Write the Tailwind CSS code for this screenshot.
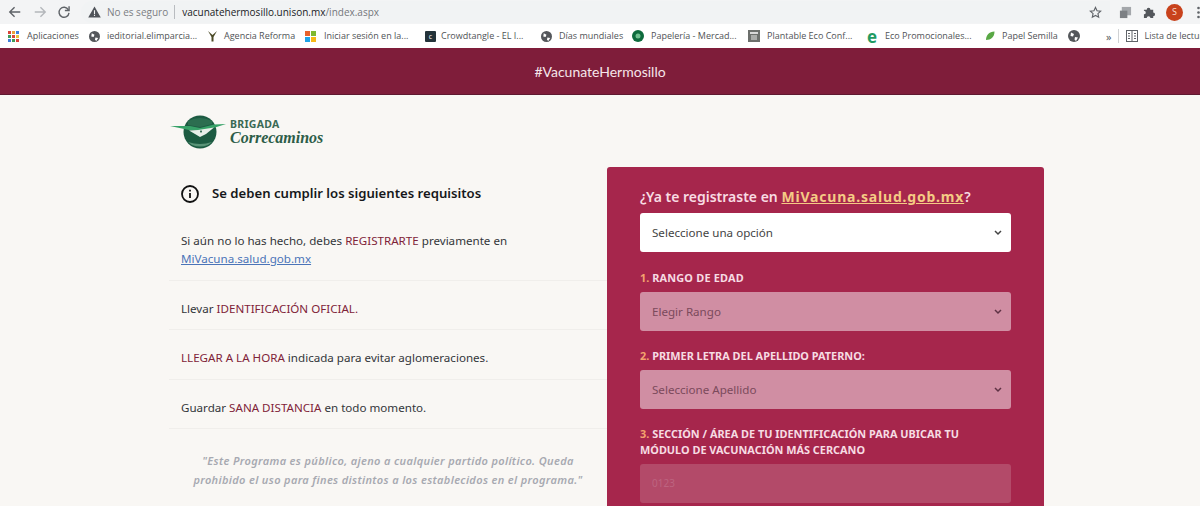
<!DOCTYPE html>
<html lang="es">
  <head>
    <meta charset="UTF-8" />
    <title>#VacunateHermosillo</title>
    <script src="https://cdn.jsdelivr.net/npm/@tailwindcss/browser@4"></script>
  </head>
  <body class="h-[506px] overflow-hidden bg-[#f9f7f4] font-['Noto_Sans','Open_Sans',sans-serif]">
    <!-- Browser toolbar -->
    <div class="flex h-[24px] items-center bg-[#f3f4f5] pl-[8px] text-[#5f6368]">
      <svg class="w-[14px] h-[14px]" viewBox="0 0 16 16" fill="none" stroke="#5f6368" stroke-width="1.6"><path d="M14 8H2M7.5 2.5 2 8l5.500 5.500" /></svg>
      <svg class="ml-[11px] w-[14px] h-[14px]" viewBox="0 0 16 16" fill="none" stroke="#b4b7bb" stroke-width="1.6"><path d="M2 8h12M8.500 2.500 14 8l-5.500 5.500" /></svg>
      <svg class="ml-[10px] w-[14px] h-[14px]" viewBox="0 0 16 16" fill="none" stroke="#5f6368" stroke-width="1.6"><path d="M13 5.500A5.700 5.700 0 1 0 13.700 9" /><path d="M13.800 1.500v4.800H9" /></svg>
      <div class="ml-[10px] flex h-[22px] flex-1 items-center rounded-l-full bg-[#f1f3f4] pl-[7px] font-['Open_Sans',sans-serif] text-[10px]">
        <svg class="w-[13px] h-[12px]" viewBox="0 0 14 13"><path d="M7 .5 13.800 12.500H.2Z" fill="#50545a" /><path d="M6.400 4.500h1.200v4.200H6.400zM6.400 9.600h1.200v1.200H6.400z" fill="#f1f3f4" /></svg>
        <span class="ml-[6px] text-[#7b7e83]">No es seguro</span>
        <span class="ml-[6px] h-[14px] w-px bg-[#b9bcc0]"></span>
        <span class="ml-[7px] text-[#202124]">vacunatehermosillo.unison.mx<span class="text-[#74777c]">/index.aspx</span></span>
        <svg class="ml-auto mr-[8px] w-[13px] h-[13px]" viewBox="0 0 16 16" fill="none" stroke="#5f6368" stroke-width="1.400"><path d="m8 1.800 1.900 4.100 4.400.5-3.300 3 .9 4.400L8 11.600l-3.900 2.200.9-4.400-3.300-3 4.400-.5Z" /></svg>
      </div>
      <div class="ml-[9px] flex items-center">
        <svg class="w-[13px] h-[13px]" viewBox="0 0 14 14"><rect x="3" y="1" width="10" height="9" fill="#a4a7ab" /><rect x="1" y="5" width="8" height="8" fill="#7d8084" /></svg>
        <svg class="ml-[11px] w-[13px] h-[13px]" viewBox="0 0 14 14" fill="#54575c"><path d="M1 4h3a2 2 0 0 1 4 0h3v3a2 2 0 0 1 0 4v2H8a2 2 0 0 0-4 0H1V9a2 2 0 0 0 0-4Z" /></svg>
        <span class="ml-[10px] flex h-[17px] w-[17px] items-center justify-center rounded-full bg-[#c8421c] text-[9px] text-[#f7d7cb]">S</span>
        <svg class="ml-[14px] w-[3px] h-[13px]" viewBox="0 0 3 13" fill="#5f6368"><circle cx="1.500" cy="2" r="1.300" /><circle cx="1.500" cy="6.500" r="1.300" /><circle cx="1.500" cy="11" r="1.300" /></svg>
      </div>
    </div>

    <!-- Bookmarks bar -->
    <div class="flex h-[24px] items-center overflow-hidden whitespace-nowrap bg-white pl-[8px] font-['Open_Sans',sans-serif] text-[9px] text-[#505356] *:shrink-0">
      <div class="flex w-[81px] items-center">
        <svg class="w-[11px] h-[11px]" viewBox="0 0 11 11"><rect x="0" y="0" width="3" height="3" fill="#d9453a" /><rect x="4" y="0" width="3" height="3" fill="#e8a33b" /><rect x="8" y="0" width="3" height="3" fill="#3f7fdb" /><rect x="0" y="4" width="3" height="3" fill="#3f9a57" /><rect x="4" y="4" width="3" height="3" fill="#d9453a" /><rect x="8" y="4" width="3" height="3" fill="#e8c33b" /><rect x="0" y="8" width="3" height="3" fill="#3f7fdb" /><rect x="4" y="8" width="3" height="3" fill="#3f9a57" /><rect x="8" y="8" width="3" height="3" fill="#d9453a" /></svg>
        <span class="ml-[8px]">Aplicaciones</span>
      </div>
      <div class="flex w-[118px] items-center">
        <svg class="w-[11px] h-[11px]" viewBox="0 0 12 12"><circle cx="6" cy="6" r="6" fill="#54575b" /><path d="M3 2.500 6 4 5 6.500 2.500 6ZM7 7l3 .5L8 11 6.500 9.500Z" fill="#fff" /></svg>
        <span class="ml-[7px]">ieditorial.elimparcia...</span>
      </div>
      <div class="flex w-[98px] items-center">
        <svg class="w-[11px] h-[12px]" viewBox="0 0 11 12" fill="#4b4a26"><path d="M1 1 5.500 5 10 1 6.500 7v4.500h-2V7Z" /></svg>
        <span class="ml-[6px]">Agencia Reforma</span>
      </div>
      <div class="flex w-[120px] items-center">
        <svg class="w-[11px] h-[11px]" viewBox="0 0 11 11"><rect width="5" height="5" fill="#e8622c" /><rect x="6" width="5" height="5" fill="#7fb82f" /><rect y="6" width="5" height="5" fill="#1fa3e8" /><rect x="6" y="6" width="5" height="5" fill="#f7b917" /></svg>
        <span class="ml-[8px]">Iniciar sesión en la...</span>
      </div>
      <div class="flex w-[116px] items-center">
        <span class="flex h-[11px] w-[11px] items-center justify-center rounded-[1px] bg-[#24333a] text-[7px] leading-none text-white">c</span>
        <span class="ml-[5px]">Crowdtangle - EL I...</span>
      </div>
      <div class="flex w-[91px] items-center">
        <svg class="w-[11px] h-[11px]" viewBox="0 0 12 12"><circle cx="6" cy="6" r="6" fill="#54575b" /><path d="M3 2.500 6 4 5 6.500 2.500 6ZM7 7l3 .5L8 11 6.500 9.500Z" fill="#fff" /></svg>
        <span class="ml-[7px]">Días mundiales</span>
      </div>
      <div class="flex w-[116px] items-center">
        <svg class="w-[12px] h-[12px]" viewBox="0 0 12 12"><circle cx="6" cy="6" r="6" fill="#0e6b3d" /><circle cx="6" cy="6" r="2.500" fill="#6fc08f" /></svg>
        <span class="ml-[7px]">Papelería - Mercad...</span>
      </div>
      <div class="flex w-[118px] items-center">
        <svg class="w-[12px] h-[12px]" viewBox="0 0 12 12"><rect width="12" height="12" fill="#6c6f6c" /><rect x="2" y="2" width="8" height="2" fill="#d8d8d8" /><rect x="3" y="5" width="6" height="5" fill="#a9aba9" /></svg>
        <span class="ml-[7px]">Plantable Eco Conf...</span>
      </div>
      <div class="flex w-[119px] items-center">
        <span class="w-[12px] text-center text-[17px] leading-none font-bold text-[#1f9b63]">e</span>
        <span class="ml-[7px]">Eco Promocionales...</span>
      </div>
      <div class="flex w-[83px] items-center">
        <svg class="w-[10px] h-[10px]" viewBox="0 0 10 10"><path d="M1 9C1 4 4 1 9.500 .5 9.500 6 6 9 1 9Z" fill="#59a845" /></svg>
        <span class="ml-[7px]">Papel Semilla</span>
      </div>
      <svg class="w-[12px] h-[12px]" viewBox="0 0 12 12"><circle cx="6" cy="6" r="6" fill="#54575b" /><path d="M3 2.500 6 4 5 6.500 2.500 6ZM7 7l3 .5L8 11 6.500 9.500Z" fill="#fff" /></svg>
      <span class="ml-[26px] text-[11px] leading-none">»</span>
      <span class="ml-[7px] h-[14px] w-px bg-[#d0d2d4]"></span>
      <svg class="ml-[7px] w-[12px] h-[12px]" viewBox="0 0 12 12" fill="none" stroke="#5f6368"><rect x=".5" y=".5" width="11" height="11" /><path d="M6 .5v11M2 3.500h2M2 6h2M2 8.500h2M8 3.500h2M8 6h2M8 8.500h2" /></svg>
      <span class="ml-[6px]">Lista de lectura</span>
    </div>

    <!-- Page header -->
    <header class="flex h-[47px] items-center justify-center border-b border-[#5f1830] bg-[#7f1d3a] font-['Lato',sans-serif] text-[14px] text-[#f6e6ea]">#VacunateHermosillo</header>

    <main class="flex pl-[169px]">
      <!-- Requirements -->
      <section class="w-[438px]">
        <div class="flex h-[72px] items-center pl-[1px] pt-[2px]">
          <svg class="w-[56px] h-[34px]" viewBox="0 0 56 34">
            <circle cx="30" cy="17" r="16.500" fill="#1d5b42" />
            <path d="M18 6Q30 0 42 6L42 9 30 12 18 10Z" fill="#2c6e50" />
            <path d="M0 11 20 11 30 13 44 9.500 56 9 45 12.500 34 15 19 15Z" fill="#37a268" />
            <path d="M19 15.500 28 15 44 12.500 36 19 30 22 25 19Z" fill="#e8efe9" />
            <path d="m31 15 1 1.500-1 1.500-1-1.500Z" fill="#1d5b42" />
            <path d="M18 27Q30 31 42 27L38 30Q30 33 22 30Z" fill="#5b9478" />
          </svg>
          <div class="ml-[4px] flex flex-col">
            <span class="text-[10.500px] leading-[11px] font-bold tracking-[0.3px] text-[#3a6a55]">BRIGADA</span>
            <span class="font-['Liberation_Serif',serif] text-[16px] leading-[15px] font-bold italic text-[#2d5d48]">Correcaminos</span>
          </div>
        </div>
        <div class="flex h-[54px] items-center pl-[12px]">
          <svg class="w-[18px] h-[18px]" viewBox="0 0 18 18" fill="none" stroke="#111" stroke-width="1.800"><circle cx="9" cy="9" r="8" /><path d="M9 8v5M9 4.700v1.700" /></svg>
          <h2 class="ml-[13px] text-[13.150px] font-semibold text-[#16171a]">Se deben cumplir los siguientes requisitos</h2>
        </div>
        <ul class="text-[11.600px] text-[#33363a]">
          <li class="h-[60px] border-b border-[#f0eeeb] pl-[12px] pt-[11px] leading-[18px]">
            Si aún no lo has hecho, debes <span class="text-[#7f2338]">REGISTRARTE</span> previamente en<br />
            <a class="text-[#4b74b8] underline">MiVacuna.salud.gob.mx</a>
          </li>
          <li class="flex h-[49px] items-center border-b border-[#f0eeeb] pl-[12px] pt-[7px]"><span>Llevar <span class="text-[#7f2338]">IDENTIFICACIÓN OFICIAL.</span></span></li>
          <li class="flex h-[50px] items-center border-b border-[#f0eeeb] pl-[12px] pt-[7px]"><span><span class="text-[#7f2338]">LLEGAR A LA HORA</span> indicada para evitar aglomeraciones.</span></li>
          <li class="flex h-[49px] items-center border-b border-[#f0eeeb] pl-[12px] pt-[7px]"><span>Guardar <span class="text-[#7f2338]">SANA DISTANCIA</span> en todo momento.</span></li>
        </ul>
        <p class="mt-[22px] text-center text-[11px] leading-[19px] font-semibold tracking-[0.35px] text-[#a7a9b1] italic">"Este Programa es público, ajeno a cualquier partido político. Queda<br />prohibido el uso para fines distintos a los establecidos en el programa."</p>
      </section>

      <!-- Registration form -->
      <section class="mt-[72px] h-[339px] w-[437px] overflow-hidden rounded-t-[3px] bg-[#a6264c] px-[33px] pt-[20px]">
        <h3 class="text-[14px] leading-[20px] font-semibold text-[#f8dbe3]">¿Ya te registraste en <a class="font-bold tracking-[0.8px] text-[#f5cb84] underline">MiVacuna.salud.gob.mx</a>?</h3>
        <div class="mt-[6px] flex h-[39px] items-center justify-between rounded-[3px] bg-white pr-[9px] pl-[12px] text-[11.600px] text-[#444]">
          Seleccione una opción
          <svg class="w-[8px] h-[6px]" viewBox="0 0 8 6" fill="none" stroke="#444" stroke-width="1.500"><path d="m1 1 3 3 3-3" /></svg>
        </div>
        <label class="mt-[18px] block text-[10.900px] leading-[16px] font-bold text-[#f6dce3]"><span class="text-[#f3a36e]">1.</span> <span class="tracking-[0.2px]">RANGO DE EDAD</span></label>
        <div class="mt-[6px] flex h-[39px] items-center justify-between rounded-[3px] bg-[#d08ea3] pr-[9px] pl-[12px] text-[11.600px] text-[#7b4a5c]">
          Elegir Rango
          <svg class="w-[8px] h-[6px]" viewBox="0 0 8 6" fill="none" stroke="#5f3245" stroke-width="1.500"><path d="m1 1 3 3 3-3" /></svg>
        </div>
        <label class="mt-[17px] block text-[10.900px] leading-[16px] font-bold text-[#f6dce3]"><span class="text-[#f3a36e]">2.</span> PRIMER LETRA DEL APELLIDO PATERNO:</label>
        <div class="mt-[6px] flex h-[39px] items-center justify-between rounded-[3px] bg-[#d08ea3] pr-[9px] pl-[12px] text-[11.600px] text-[#7b4a5c]">
          Seleccione Apellido
          <svg class="w-[8px] h-[6px]" viewBox="0 0 8 6" fill="none" stroke="#5f3245" stroke-width="1.500"><path d="m1 1 3 3 3-3" /></svg>
        </div>
        <label class="mt-[17px] block text-[10.900px] leading-[16px] font-bold text-[#f6dce3]"><span class="text-[#f3a36e]">3.</span> SECCIÓN / ÁREA DE TU IDENTIFICACIÓN PARA UBICAR TU<br />MÓDULO DE VACUNACIÓN MÁS CERCANO</label>
        <div class="mt-[6px] flex h-[39px] items-center rounded-[3px] bg-[#b34a69] pl-[12px] text-[10px] text-[#bd6480]">0123</div>
      </section>
    </main>
  </body>
</html>
